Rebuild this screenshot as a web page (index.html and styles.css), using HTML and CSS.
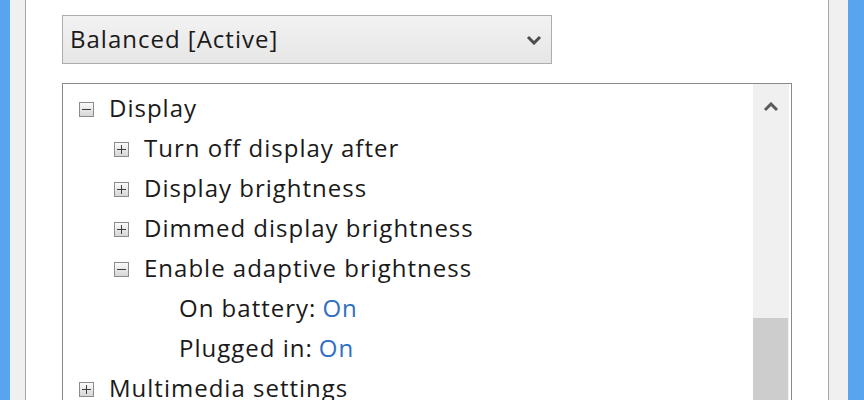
FILE: index.html
```html
<!DOCTYPE html>
<html lang="en">
<head>
  <meta charset="UTF-8">
  <title>Power Options - Advanced settings</title>
  <link rel="stylesheet" href="styles.css">
</head>
<body>
  <div class="window">
    <!-- левая рамка окна -->
    <div class="frame-blue"></div>
    <div class="frame-gray left"></div>

    <div class="content">
      <!-- выбор схемы питания -->
      <div class="combo">
        <span class="combo-text">Balanced [Active]</span>
        <svg class="chevron" width="16" height="10" viewBox="0 0 16 10">
          <path d="M2 2 L8 8 L14 2" fill="none" stroke="#4d4d4d" stroke-width="3"/>
        </svg>
      </div>

      <!-- дерево настроек -->
      <div class="tree-box">
        <ul class="tree">
          <li class="row lvl0"><span class="exp minus"></span>Display</li>
          <li class="row lvl1"><span class="exp plus"></span>Turn off display after</li>
          <li class="row lvl1"><span class="exp plus"></span>Display brightness</li>
          <li class="row lvl1"><span class="exp plus"></span>Dimmed display brightness</li>
          <li class="row lvl1"><span class="exp minus"></span>Enable adaptive brightness</li>
          <li class="row lvl2">On battery: <a class="value">On</a></li>
          <li class="row lvl2">Plugged in: <a class="value">On</a></li>
          <li class="row lvl0"><span class="exp plus"></span>Multimedia settings</li>
        </ul>
        <div class="scrollbar">
          <div class="scroll-btn">
            <svg width="16" height="10" viewBox="0 0 16 10">
              <path d="M2 8 L8 2 L14 8" fill="none" stroke="#5a5a5a" stroke-width="3"/>
            </svg>
          </div>
          <div class="scroll-track"></div>
          <div class="scroll-thumb"></div>
        </div>
      </div>
    </div>

    <!-- правая рамка окна -->
    <div class="frame-gray right"></div>
    <div class="frame-blue"></div>
  </div>
</body>
</html>
```

FILE: styles.css
```css
body {
  margin: 0;
  padding: 0;
  background-color: #fff;
  font-family: "Open Sans", "Noto Sans", sans-serif;
  color: #1a1a1a;
  overflow: hidden;
}

.window {
  display: flex;
  height: 400px;
}

/* Синяя рамка окна */
.frame-blue {
  width: 10px;
  background-color: #58a4ee;
}

.frame-blue:last-child {
  width: 16px;
}

.frame-gray {
  width: 15px;
  background-color: #f0f0f0;
}

.frame-gray.left {
  border-right: 1px solid #a6a6a6;
}

.frame-gray.right {
  width: 19px;
  border-left: 1px solid #a6a6a6;
}

.content {
  flex: 1;
  padding: 15px 35px 0 36px;
  overflow: hidden;
}

/* Выпадающий список */
.combo {
  width: 490px;
  height: 49px;
  border: 1px solid #adadad;
  background: linear-gradient(#f2f2f2, #e6e6e6);
  display: flex;
  align-items: center;
  justify-content: space-between;
  padding: 0 10px 0 7px;
  box-sizing: border-box;
}

.combo-text {
  font-size: 24px;
  letter-spacing: 1px;
  padding-bottom: 2px;
}

.chevron {
  margin-right: -1px;
}

/* Дерево */
.tree-box {
  margin-top: 19px;
  width: 730px;
  height: 340px;
  border: 1px solid #8a8a8a;
  box-sizing: border-box;
  display: flex;
  background-color: #fff;
}

.tree {
  flex: 1;
  list-style: none;
  margin: 0;
  padding: 4px 0 0 0;
}

.row {
  height: 40px;
  line-height: 40px;
  font-size: 24px;
  letter-spacing: 1px;
  display: flex;
  align-items: center;
  white-space: nowrap;
}

.lvl0 { padding-left: 16px; }
.lvl1 { padding-left: 51px; }
.lvl2 { padding-left: 116px; }

.exp {
  position: relative;
  width: 15px;
  height: 15px;
  border: 1px solid #8c8c8c;
  box-sizing: border-box;
  background: linear-gradient(#fafafa, #d6d6d6);
  margin-right: 15px;
  margin-top: 2px;
}

.exp::before,
.exp.plus::after {
  content: "";
  position: absolute;
  background-color: #3c3c3c;
}

.exp::before {
  left: 2px;
  right: 2px;
  top: 6px;
  height: 1px;
}

.exp.plus::after {
  top: 2px;
  bottom: 2px;
  left: 6px;
  width: 1px;
}

.value {
  color: #2f6fc4;
  margin-left: 6px;
}

/* Полоса прокрутки */
.scrollbar {
  width: 36px;
  margin-right: 2px;
  background-color: #f0f0f0;
  display: flex;
  flex-direction: column;
}

.scroll-btn {
  height: 40px;
  display: flex;
  align-items: center;
  justify-content: center;
  padding-top: 6px;
  box-sizing: border-box;
}

.scroll-track {
  height: 194px;
}

.scroll-thumb {
  flex: 1;
  background-color: #cdcdcd;
  margin-right: 1px;
}
```
